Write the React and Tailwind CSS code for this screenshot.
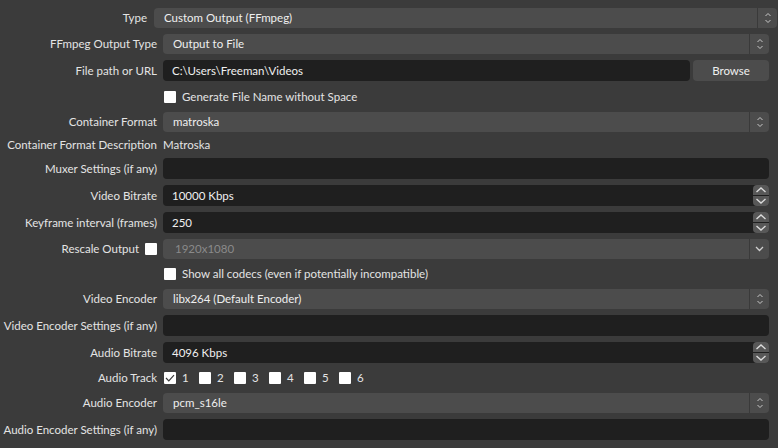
const font = { fontFamily: "Lato, 'Noto Sans', sans-serif" };

const ComboArrows = ({ single }) => (
  <div className="w-5 h-full border-l border-[#3a3a3a] flex items-center justify-center">
    {single ? (
      <svg width="9" height="6" viewBox="0 0 9 6">
        <path d="M1 1 L4.5 4.5 L8 1" stroke="#d0d0d0" strokeWidth="1.3" fill="none" />
      </svg>
    ) : (
      <svg width="8" height="12" viewBox="0 0 8 12">
        <path d="M1.5 4 L4 1.5 L6.5 4" stroke="#c8c8c8" strokeWidth="1" fill="none" />
        <path d="M1.5 8 L4 10.5 L6.5 8" stroke="#c8c8c8" strokeWidth="1" fill="none" />
      </svg>
    )}
  </div>
);

const Combo = ({ value, single, disabled }) => (
  <div className="flex-1 h-5 bg-[#4c4c4c] rounded flex items-center">
    <div className={`flex-1 ${disabled ? "pl-[12px] text-[#8a8a8a]" : "pl-[10px] text-[#efefef]"}`}>
      {value}
    </div>
    <ComboArrows single={single} />
  </div>
);

const TextInput = ({ value, className = "" }) => (
  <div className={`h-[21px] bg-[#1f1f1f] rounded flex items-center pl-[9px] text-[#f0f0f0] ${className}`}>
    {value}
  </div>
);

const Spin = ({ value }) => (
  <div className="flex-1 flex items-center h-[21px]">
    <div className="flex-1 h-full bg-[#1f1f1f] rounded-l flex items-center pl-[9px] text-[#f0f0f0]">{value}</div>
    <div className="w-4 h-full bg-[#1f1f1f] rounded-r flex flex-col gap-px">
      <div className="flex-1 bg-[#585858] rounded-t flex items-center justify-center">
        <svg width="12" height="6" viewBox="0 0 12 6">
          <path d="M1.5 5 L6 1 L10.5 5" stroke="#dcdcdc" strokeWidth="1.4" fill="none" />
        </svg>
      </div>
      <div className="flex-1 bg-[#585858] rounded-b flex items-center justify-center">
        <svg width="12" height="6" viewBox="0 0 12 6">
          <path d="M1.5 1 L6 5 L10.5 1" stroke="#dcdcdc" strokeWidth="1.4" fill="none" />
        </svg>
      </div>
    </div>
  </div>
);

const Check = ({ checked }) => (
  <div className="w-3 h-3 bg-white rounded-[1px] flex items-center justify-center shrink-0">
    {checked && (
      <svg width="10" height="8" viewBox="0 0 10 8">
        <path d="M1 4 L3.8 6.8 L9 1.2" stroke="#3a3a3a" strokeWidth="1.2" fill="none" />
      </svg>
    )}
  </div>
);

const Row = ({ label, h = "h-5", children }) => (
  <div className={`flex items-center ${h}`}>
    <div className="w-[157px] shrink-0 text-right text-[#e4e4e4] whitespace-nowrap">{label}</div>
    <div className="flex-1 flex items-center gap-[3px] pl-[6px] pr-[9px] h-full">{children}</div>
  </div>
);

export default function App() {
  return (
    <div
      className="w-[778px] h-[448px] bg-[#3b3b3b] text-[11.5px] leading-none pt-2 flex flex-col gap-1.5 overflow-hidden"
      style={font}
    >
      {/* Type */}
      <div className="flex items-center h-5">
        <div className="w-[147px] shrink-0 text-right text-[#e4e4e4]">Type</div>
        <div className="flex-1 flex pl-[7px] pr-px h-full">
          <Combo value="Custom Output (FFmpeg)" />
        </div>
      </div>

      <Row label="FFmpeg Output Type">
        <Combo value="Output to File" />
      </Row>

      <Row label="File path or URL" h="h-[21px]">
        <TextInput value="C:\Users\Freeman\Videos" className="flex-1" />
        <div className="w-[76px] h-[21px] bg-[#4c4c4c] rounded flex items-center justify-center text-[#f0f0f0]">
          Browse
        </div>
      </Row>

      <Row label="" h="h-[19px]">
        <div className="flex items-center gap-[6px] pl-px text-[#e4e4e4]">
          <Check />
          <span>Generate File Name without Space</span>
        </div>
      </Row>

      <Row label="Container Format">
        <Combo value="matroska" />
      </Row>

      <Row label="Container Format Description" h="h-[14px]">
        <span className="text-[#e4e4e4]">Matroska</span>
      </Row>

      <Row label="Muxer Settings (if any)" h="h-[21px]">
        <TextInput value="" className="flex-1" />
      </Row>

      <Row label="Video Bitrate" h="h-[21px]">
        <Spin value="10000 Kbps" />
      </Row>

      <Row label="Keyframe interval (frames)" h="h-[21px]">
        <Spin value="250" />
      </Row>

      {/* Rescale */}
      <div className="flex items-center h-5">
        <div className="w-[157px] shrink-0 flex items-center justify-end gap-[6px] text-[#e4e4e4] whitespace-nowrap">
          <span>Rescale Output</span>
          <Check />
        </div>
        <div className="flex-1 flex pl-[6px] pr-[9px] h-full">
          <Combo value="1920x1080" single disabled />
        </div>
      </div>

      <Row label="" h="h-[18px]">
        <div className="flex items-center gap-[6px] pl-px text-[#e4e4e4]">
          <Check />
          <span>Show all codecs (even if potentially incompatible)</span>
        </div>
      </Row>

      <Row label="Video Encoder">
        <Combo value="libx264 (Default Encoder)" />
      </Row>

      <Row label="Video Encoder Settings (if any)" h="h-[21px]">
        <TextInput value="" className="flex-1" />
      </Row>

      <Row label="Audio Bitrate" h="h-[21px]">
        <Spin value="4096 Kbps" />
      </Row>

      <Row label="Audio Track" h="h-[18px]">
        <div className="flex items-center pl-px text-[#e4e4e4]">
          {[1, 2, 3, 4, 5, 6].map((n) => (
            <div key={n} className="w-[35px] flex items-center gap-[6px]">
              <Check checked={n === 1} />
              <span>{n}</span>
            </div>
          ))}
        </div>
      </Row>

      <Row label="Audio Encoder">
        <Combo value="pcm_s16le" />
      </Row>

      <Row label="Audio Encoder Settings (if any)" h="h-[21px]">
        <TextInput value="" className="flex-1" />
      </Row>
    </div>
  );
}
